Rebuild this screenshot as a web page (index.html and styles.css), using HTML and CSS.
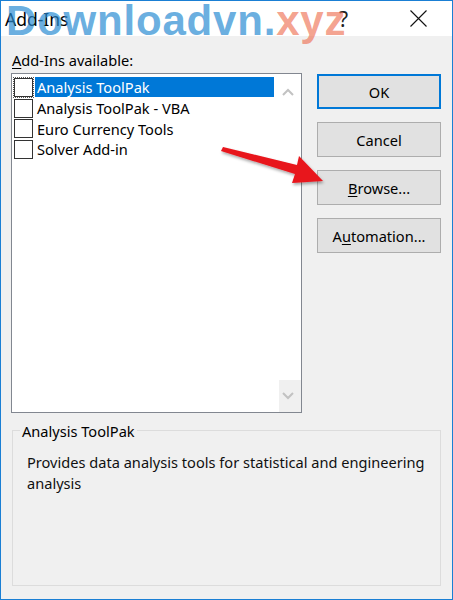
FILE: index.html
```html
<!DOCTYPE html>
<html>
<head>
<meta charset="utf-8">
<link rel="stylesheet" href="styles.css">
</head>
<body>
<div class="window">
  <div class="titlebar">
    <span class="title">Add-Ins</span>
    <span class="help">?</span>
    <span class="close">
      <svg width="17" height="17" viewBox="0 0 17 17"><path d="M0.5 0.5L16.5 16.5M16.5 0.5L0.5 16.5" stroke="#111" stroke-width="1.1" fill="none"/></svg>
    </span>
  </div>
  <div class="content">
    <div class="main">
      <div class="left">
        <div class="label"><span class="ul">A</span>dd-Ins available:</div>
        <div class="listbox">
          <div class="items">
            <div class="item selected"><span class="cb focus"></span><span class="txt">Analysis ToolPak</span></div>
            <div class="item"><span class="cb"></span><span class="txt">Analysis ToolPak - VBA</span></div>
            <div class="item"><span class="cb"></span><span class="txt">Euro Currency Tools</span></div>
            <div class="item"><span class="cb"></span><span class="txt">Solver Add-in</span></div>
          </div>
          <div class="scrollbar">
            <span class="sbtn">
              <svg width="12" height="8" viewBox="0 0 12 8"><path d="M1 7L6 2L11 7" stroke="#c2c2c2" stroke-width="2" fill="none"/></svg>
            </span>
            <span class="sbtn">
              <svg width="12" height="8" viewBox="0 0 12 8"><path d="M1 1L6 6L11 1" stroke="#c2c2c2" stroke-width="2" fill="none"/></svg>
            </span>
          </div>
        </div>
      </div>
      <div class="buttons">
        <div class="btn default">OK</div>
        <div class="btn">Cancel</div>
        <div class="btn"><span class="ul">B</span>rowse...</div>
        <div class="btn">A<span class="ul">u</span>tomation...</div>
      </div>
    </div>
    <fieldset class="group">
      <legend>Analysis ToolPak</legend>
      <p class="desc">Provides data analysis tools for statistical and engineering analysis</p>
    </fieldset>
  </div>
  <div class="watermark"><span class="wm-blue">Downloadvn.</span><span class="wm-orange">xyz</span></div>
  <svg class="arrow" width="120" height="50" viewBox="0 0 120 50">
    <defs>
      <filter id="sh" x="-20%" y="-50%" width="140%" height="200%">
        <feDropShadow dx="1" dy="2" stdDeviation="1.5" flood-color="#000" flood-opacity="0.35"/>
      </filter>
    </defs>
    <polygon filter="url(#sh)" points="2,8 4,4 78,22 80,13 104,38 73,40 76,31" fill="#e8141c"/>
  </svg>
</div>
</body>
</html>
```

FILE: styles.css
```css
* { box-sizing: border-box; }
html, body { margin: 0; padding: 0; }
body {
  width: 453px;
  height: 600px;
  background: #f0f0f0;
  font-family: "Noto Sans", "Open Sans", sans-serif;
  font-size: 14.6px;
  color: #000;
}
.window {
  position: relative;
  width: 453px;
  height: 600px;
  border: 1px solid #1a7fd4;
  background: #f0f0f0;
  display: flex;
  flex-direction: column;
  overflow: hidden;
}
.titlebar {
  height: 35px;
  background: #fff;
  display: flex;
  align-items: center;
  padding-left: 4px;
  flex: none;
}
.title {
  font-size: 17.5px;
  color: #000;
}
.help {
  margin-left: auto;
  font-size: 21px;
  color: #222;
  margin-right: 62px;
}
.close {
  display: flex;
  margin-right: 25px;
}
.content {
  padding: 14px 11px 13px 10px;
  display: flex;
  flex-direction: column;
  flex: 1;
}
.main {
  display: flex;
  gap: 15px;
}
.left {
  width: 291px;
  display: flex;
  flex-direction: column;
}
.label {
  height: 20px;
  line-height: 20px;
  padding-left: 1px;
  margin-bottom: 3px;
}
.ul { text-decoration: underline; text-underline-offset: 2px; }
.listbox {
  height: 340px;
  background: #fff;
  border: 1px solid #828790;
  display: flex;
}
.items {
  flex: 1;
  padding-top: 3px;
  padding-left: 2px;
  padding-right: 5px;
}
.item {
  height: 20.7px;
  display: flex;
  align-items: center;
}
.cb {
  width: 19px;
  height: 19px;
  border: 1px solid #333;
  background: #fff;
  flex: none;
}
.cb.focus { outline: 1px dotted #555; outline-offset: 0; }
.txt {
  margin-left: 2px;
  padding-left: 2px;
  height: 20px;
  line-height: 20px;
  flex: 1;
}
.item.selected .txt {
  background: #0078d7;
  color: #fff;
}
.scrollbar {
  width: 22px;
  display: flex;
  flex-direction: column;
  justify-content: space-between;
}
.sbtn {
  height: 24px;
  display: flex;
  align-items: center;
  justify-content: center;
  padding-right: 4px;
}
.scrollbar .sbtn:first-child { margin-top: 6px; }
.scrollbar .sbtn:last-child { background: #f0f0f0; height: 32px; }
.buttons {
  width: 124px;
  padding-top: 24px;
  display: flex;
  flex-direction: column;
  gap: 13px;
}
.btn {
  height: 35px;
  border: 1px solid #adadad;
  background: #e1e1e1;
  display: flex;
  align-items: center;
  justify-content: center;
}
.btn.default {
  border: 2px solid #0078d7;
}
.group {
  margin: 6px 0 0 1px;
  border: 1px solid #dcdcdc;
  padding: 0 6px 0 7px;
  flex: 1;
  min-width: 0;
}
.group legend {
  padding: 2px 2px 0;
  line-height: 20px;
}
.desc {
  margin: 11px 0 0 7px;
  line-height: 21px;
  color: #111;
}
.watermark {
  position: absolute;
  left: 5px;
  top: -1px;
  line-height: 1;
  font-family: "Liberation Sans", Arial, sans-serif;
  font-weight: bold;
  font-size: 42px;
  letter-spacing: 0.8px;
  pointer-events: none;
}
.wm-blue { color: rgba(40, 140, 210, 0.7); }
.wm-orange { color: rgba(238, 110, 80, 0.65); }
.arrow {
  position: absolute;
  left: 218px;
  top: 142px;
}
```
